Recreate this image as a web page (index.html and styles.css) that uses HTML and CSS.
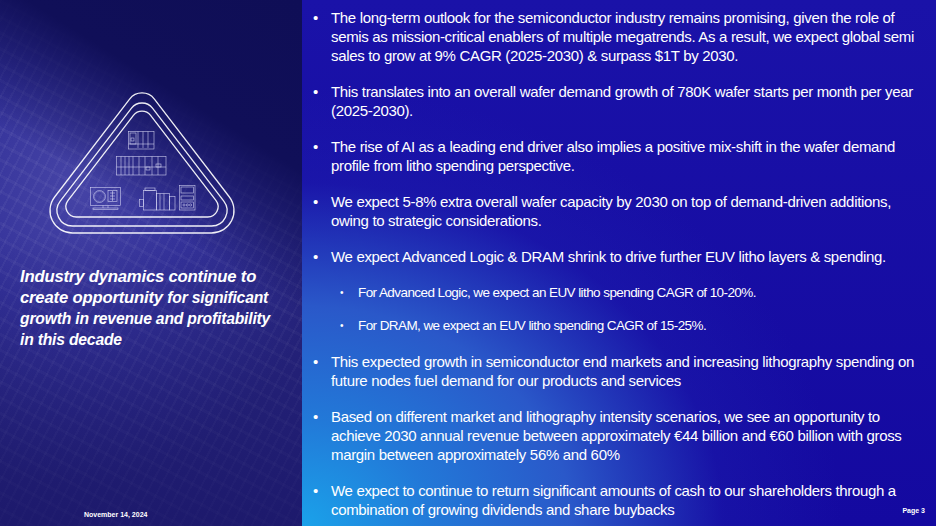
FILE: index.html
```html
<!DOCTYPE html>
<html lang="en">
<head>
<meta charset="utf-8">
<title>Industry dynamics</title>
<link rel="stylesheet" href="styles.css">
</head>
<body>
<div class="slide">
  <aside class="left">
    <svg class="emblem" viewBox="0 0 302 240" width="302" height="240" xmlns="http://www.w3.org/2000/svg">
      <g fill="none" stroke="#ffffff" stroke-width="1.3" stroke-opacity="0.92">
        <path d="M129.6,99.1 A15.6,15.6 0 0 1 154.4,99.1 L229.4,197 A22.4,22.4 0 0 1 211.6,233 L72.4,233 A22.4,22.4 0 0 1 54.6,197 Z"/>
        <path d="M131.5,108.2 A13.2,13.2 0 0 1 152.5,108.2 L223.8,201.2 A15.4,15.4 0 0 1 211.6,226 L72.4,226 A15.4,15.4 0 0 1 60.2,201.2 Z"/>
        <path d="M133.4,115.3 A10.9,10.9 0 0 1 150.6,115.3 L215.9,200.4 A10.3,10.3 0 0 1 207.7,217 L76.3,217 A10.3,10.3 0 0 1 68.1,200.4 Z"/>
      </g>
      <g fill="none" stroke="#e8e8ff" stroke-width="0.6" stroke-opacity="0.85">
        <rect x="128.5" y="131.5" width="25.5" height="17.5"/>
        <rect x="130" y="133" width="6" height="11"/>
        <line x1="138" y1="131.5" x2="138" y2="148"/>
        <line x1="143" y1="131.5" x2="143" y2="148"/>
        <line x1="148" y1="131.5" x2="148" y2="148"/>
        <line x1="128.5" y1="144" x2="154" y2="144"/>
        <rect x="131" y="138" width="3" height="3"/>
        <rect x="116.5" y="156.5" width="49.5" height="18.5"/>
        <line x1="121" y1="156.5" x2="121" y2="175"/>
        <line x1="125" y1="156.5" x2="125" y2="175"/>
        <line x1="129" y1="156.5" x2="129" y2="175"/>
        <line x1="133" y1="156.5" x2="133" y2="175"/>
        <line x1="139" y1="156.5" x2="139" y2="175"/>
        <line x1="145" y1="156.5" x2="145" y2="175"/>
        <line x1="152" y1="156.5" x2="152" y2="175"/>
        <line x1="158" y1="156.5" x2="158" y2="175"/>
        <line x1="116.5" y1="167" x2="166" y2="167"/>
        <rect x="146" y="167" width="4" height="3"/>
        <rect x="156" y="164" width="5" height="3"/>
        <rect x="90.5" y="187.5" width="30" height="18"/>
        <circle cx="99.5" cy="196.5" r="6"/>
        <circle cx="99.5" cy="196.5" r="5" stroke-opacity="0.4"/>
        <rect x="108" y="190.5" width="9" height="11"/>
        <line x1="110" y1="193" x2="115" y2="193"/>
        <line x1="110" y1="196" x2="115" y2="196"/>
        <line x1="110" y1="199" x2="115" y2="199"/>
        <line x1="112.5" y1="191" x2="112.5" y2="201"/>
        <line x1="103" y1="205.5" x2="103" y2="208"/>
        <line x1="108" y1="205.5" x2="108" y2="208"/>
        <rect x="93" y="208" width="25" height="1.5"/>
        <rect x="143.5" y="190.5" width="13" height="19.5"/>
        <rect x="139.5" y="199.5" width="4" height="7"/>
        <rect x="145" y="188" width="10" height="2.5"/>
        <rect x="156.5" y="193.5" width="13" height="16.5"/>
        <line x1="160" y1="193.5" x2="160" y2="210"/>
        <line x1="164" y1="193.5" x2="164" y2="210"/>
        <rect x="169.5" y="196.5" width="5.5" height="13.5"/>
        <rect x="179.5" y="185.5" width="15.5" height="24.5"/>
        <rect x="181" y="187" width="12.5" height="6"/>
        <rect x="181" y="196" width="12.5" height="4"/>
        <rect x="181" y="202" width="12.5" height="6"/>
        <circle cx="184" cy="205" r="1.1"/>
        <circle cx="187.3" cy="205" r="1.1"/>
        <circle cx="190.6" cy="205" r="1.1"/>
      </g>
    </svg>
    <h1 class="headline"><span class="strong">Industry dynamics continue to create opportunity</span> <span class="soft">for significant growth in revenue and profitability in this decade</span></h1>
    <div class="spacer"></div>
    <p class="date">November 14, 2024</p>
  </aside>
  <main class="right">
    <ul class="bullets">
      <li><span class="txt">The long-term outlook for the semiconductor industry remains promising, given the role of semis as mission-critical enablers of multiple megatrends. As a result, we expect global semi sales to grow at 9% CAGR (2025-2030) &amp; surpass $1T by 2030.</span></li>
      <li><span class="txt">This translates into an overall wafer demand growth of 780K wafer starts per month per year (2025-2030).</span></li>
      <li><span class="txt">The rise of AI as a leading end driver also implies a positive mix-shift in the wafer demand profile from litho spending perspective.</span></li>
      <li><span class="txt">We expect 5-8% extra overall wafer capacity by 2030 on top of demand-driven additions, owing to strategic considerations.</span></li>
      <li><span class="txt">We expect Advanced Logic &amp; DRAM shrink to drive further EUV litho layers &amp; spending.</span>
        <ul class="sub">
          <li><span class="txt">For Advanced Logic, we expect an EUV litho spending CAGR of 10-20%.</span></li>
          <li><span class="txt">For DRAM, we expect an EUV litho spending CAGR of 15-25%.</span></li>
        </ul>
      </li>
      <li><span class="txt">This expected growth in semiconductor end markets and increasing lithography spending on future nodes fuel demand for our products and services</span></li>
      <li><span class="txt">Based on different market and lithography intensity scenarios, we see an opportunity to achieve 2030 annual revenue between approximately €44 billion and €60 billion with gross margin between approximately 56% and 60%</span></li>
      <li><span class="txt">We expect to continue to return significant amounts of cash to our shareholders through a combination of growing dividends and share buybacks</span></li>
    </ul>
    <p class="page">Page 3</p>
  </main>
</div>
</body>
</html>
```

FILE: styles.css
```css
* { box-sizing: border-box; }
html, body { margin: 0; padding: 0; }
body {
  width: 936px;
  height: 526px;
  overflow: hidden;
  font-family: "Liberation Sans", Arial, sans-serif;
  color: #ffffff;
  background: #140c9c;
}
.slide {
  display: grid;
  grid-template-columns: 302px 634px;
  width: 936px;
  height: 526px;
}
.left {
  display: flex;
  flex-direction: column;
  height: 526px;
  overflow: hidden;
  background:
    linear-gradient(212deg, #0f0e56 0%, #100f58 24%, rgba(16,15,88,0) 44%),
    linear-gradient(0deg, rgba(24,20,100,0.7) 0%, rgba(24,20,100,0.25) 35%, rgba(24,20,100,0) 55%),
    repeating-linear-gradient(118deg, rgba(255,255,255,0.045) 0 2px, rgba(255,255,255,0) 2px 9px),
    repeating-linear-gradient(28deg, rgba(255,255,255,0.035) 0 3px, rgba(255,255,255,0) 3px 14px),
    radial-gradient(ellipse 260px 300px at 25% 35%, #4644a6 0%, #34329a 45%, #28267f 100%),
    #24217c;
}
.emblem {
  display: block;
  flex-shrink: 0;
}
.headline {
  margin: 26px 0 0 20px;
  width: 258px;
  font-size: 16.7px;
  line-height: 21px;
  font-style: italic;
  font-weight: 700;
  letter-spacing: -0.2px;
}
.headline .soft {
  font-size: 15.7px;
  line-height: 21px;
}
.spacer { flex: 1; }
.date {
  margin: 0 0 7px 84px;
  font-size: 7px;
  font-weight: 700;
  line-height: 9px;
}
.right {
  position: relative;
  height: 526px;
  overflow: hidden;
  padding: 8px 12px 0 11px;
  background:
    radial-gradient(ellipse 540px 440px at 0% 100%, #1aa2ea 0%, #2279d8 24%, #2a58c9 50%, rgba(30,34,176,0.35) 78%, rgba(24,16,164,0) 100%),
    linear-gradient(180deg, #1a12a8 0%, #1409a0 100%);
}
.bullets {
  list-style: none;
  margin: 0;
  padding: 0;
  font-size: 15px;
  line-height: 19px;
  letter-spacing: -0.33px;
}
.bullets > li {
  display: grid;
  grid-template-columns: 18px 1fr;
  margin-bottom: 17px;
}
.bullets > li::before {
  content: "•";
  letter-spacing: 0;
}
.bullets > li > .sub {
  grid-column: 1 / -1;
}
.sub {
  list-style: none;
  margin: 17px 0 -14px 27px;
  padding: 0;
  font-size: 13.5px;
  letter-spacing: -0.58px;
}
.sub li {
  display: grid;
  grid-template-columns: 18px 1fr;
  margin-bottom: 14px;
}
.sub li::before {
  content: "•";
  font-size: 10px;
}
.page {
  position: absolute;
  right: 11px;
  bottom: 11px;
  margin: 0;
  font-size: 7px;
  font-weight: 700;
  line-height: 9px;
}
```
